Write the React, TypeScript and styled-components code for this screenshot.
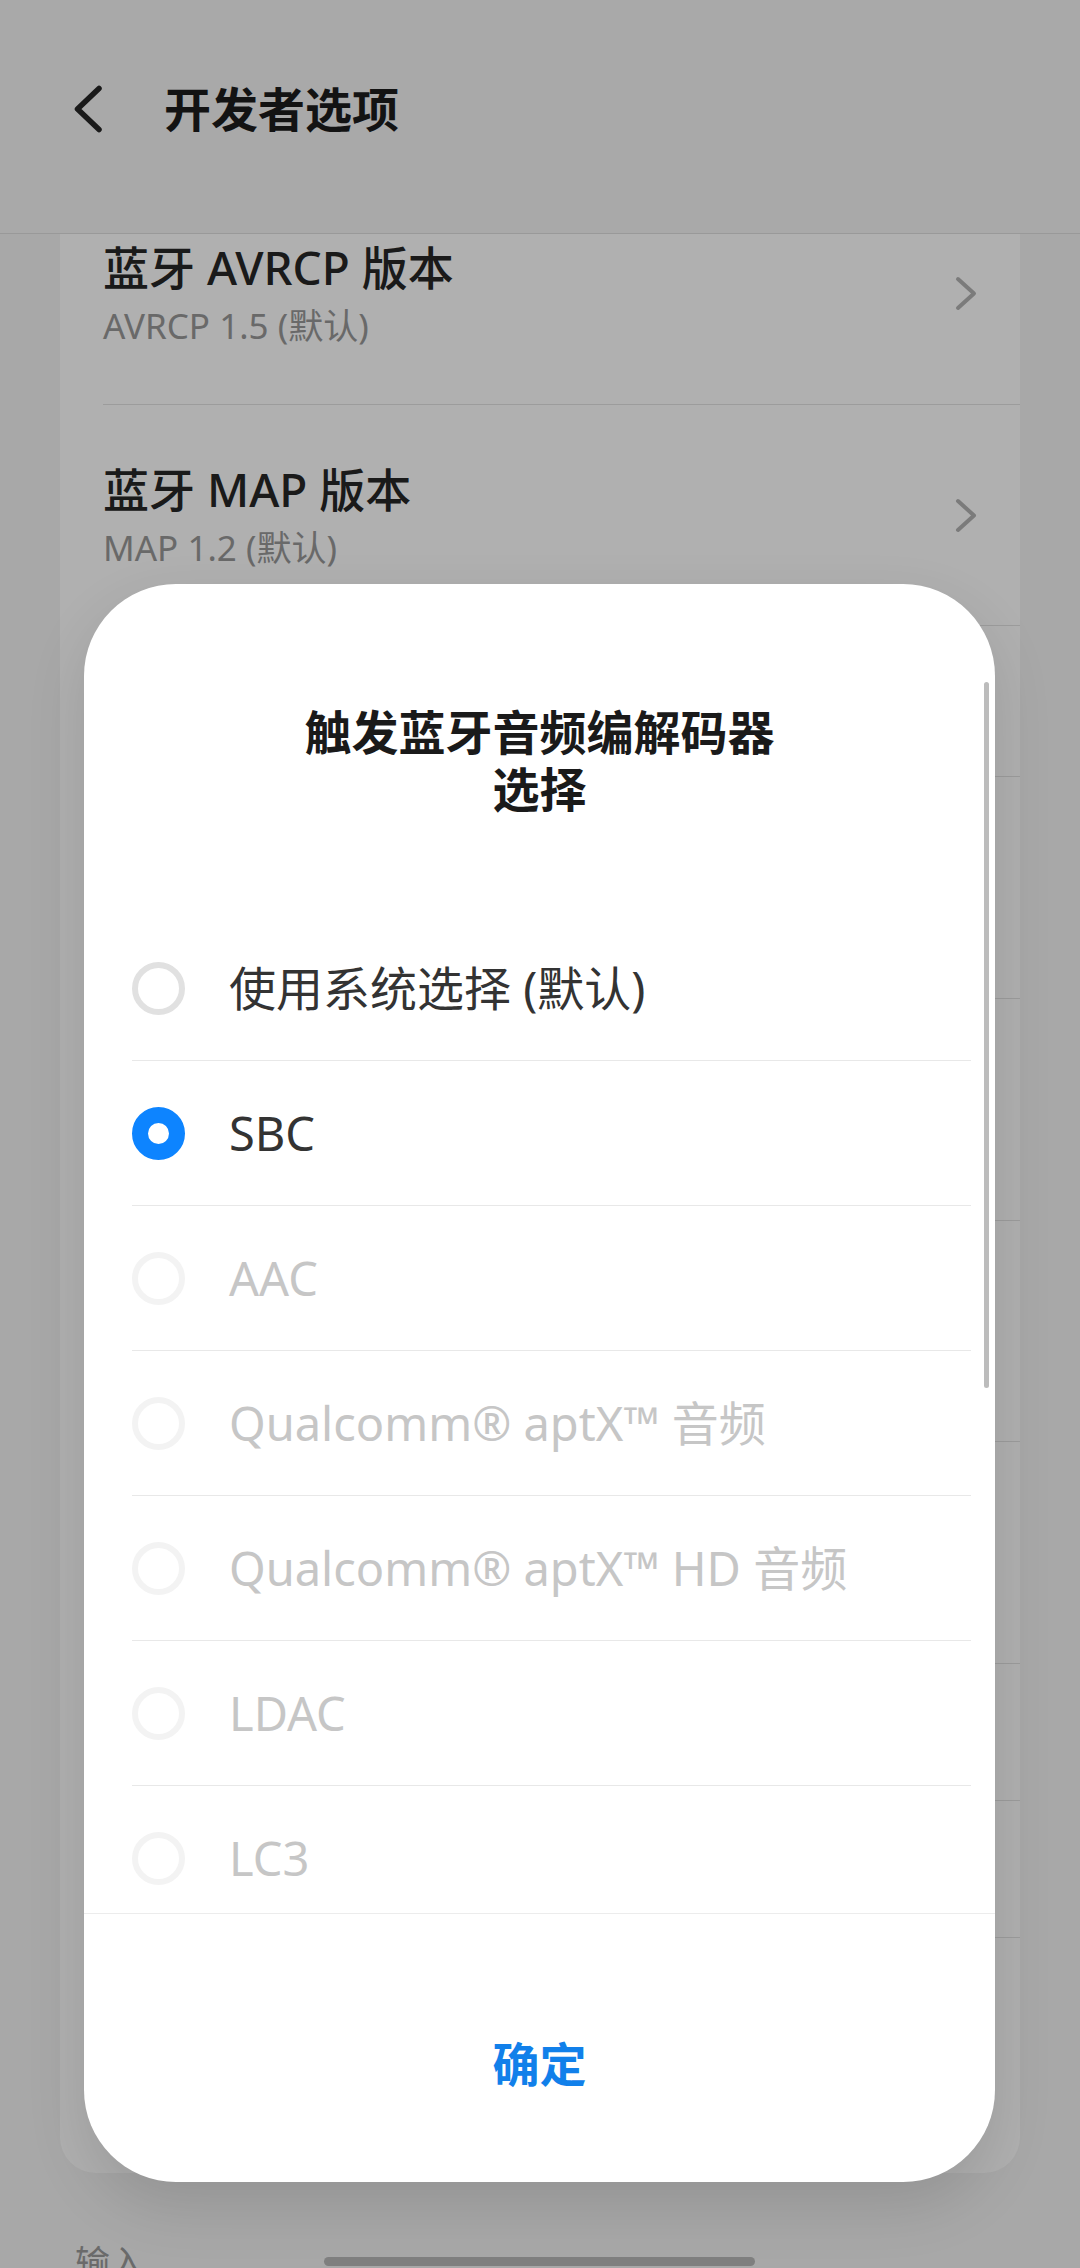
import React from "react";
import styled, { createGlobalStyle } from "styled-components";

const GlobalStyle = createGlobalStyle`
  html, body { margin: 0; padding: 0; }
  body {
    width: 1080px;
    height: 2268px;
    overflow: hidden;
    background: #f4f4f4;
    font-family: "Noto Sans", "Noto Sans CJK SC", sans-serif;
  }
  * { box-sizing: border-box; }
`;

const Screen = styled.div`
  position: relative;
  width: 1080px;
  height: 2268px;
  overflow: hidden;
  background: #f4f4f4;
  font-family: "Noto Sans", "Noto Sans CJK SC", sans-serif;
`;

const Header = styled.header`
  height: 234px;
  display: flex;
  align-items: flex-start;
  gap: 60px;
  padding: 80px 0 0 72px;
  background: #f5f5f5;
  border-bottom: 1px solid #dedede;
`;

const BackButton = styled.button`
  width: 32px;
  height: 58px;
  padding: 0;
  border: none;
  background: none;
  display: flex;
  color: #262626;
`;

const PageTitle = styled.h1`
  margin: 0;
  font-size: 47px;
  line-height: 58px;
  font-weight: 700;
  color: #1c1c1c;
`;

const Content = styled.main`
  height: 2034px;
  overflow: hidden;
  padding: 0 60px;
`;

const Card = styled.section`
  margin-top: -51px;
  background: #ffffff;
  border-radius: 36px;
`;

const SettingRow = styled.div<{ $h: number; $last?: boolean }>`
  height: ${(p) => p.$h}px;
  margin-left: 43px;
  padding-right: 43px;
  display: flex;
  align-items: center;
  justify-content: space-between;
  border-bottom: ${(p) => (p.$last ? "none" : "1px solid #e2e2e2")};
`;

const RowText = styled.div`
  display: flex;
  flex-direction: column;
  gap: 9px;
`;

const RowTitle = styled.div`
  font-size: 46px;
  line-height: 56px;
  font-weight: 500;
  color: #262626;
  white-space: nowrap;
`;

const RowValue = styled.div`
  font-size: 35px;
  line-height: 44px;
  color: #999999;
  white-space: nowrap;
`;

const Chevron = styled.svg`
  width: 22px;
  height: 35px;
  color: #b3b3b3;
  flex: none;
`;

const SectionLabel = styled.div`
  margin-top: 67px;
  padding-left: 15px;
  font-size: 35px;
  line-height: 46px;
  color: #9a9a9a;
`;

const Scrim = styled.div`
  position: absolute;
  inset: 0;
  background: rgba(0, 0, 0, 0.31);
`;

const Dialog = styled.div`
  position: absolute;
  left: 84px;
  top: 584px;
  width: 911px;
  height: 1598px;
  border-radius: 92px;
  background: #ffffff;
  display: flex;
  flex-direction: column;
  overflow: hidden;
  box-shadow: 0 24px 60px rgba(0, 0, 0, 0.12);
`;

const ScrollArea = styled.div`
  position: relative;
  flex: none;
  height: 1330px;
  overflow: hidden;
  border-bottom: 1px solid #ececec;
`;

const DialogTitle = styled.h2`
  margin: 0 auto;
  padding-top: 120px;
  width: 490px;
  text-align: center;
  font-size: 47px;
  line-height: 57px;
  font-weight: 700;
  color: #1a1a1a;
`;

const OptionList = styled.div`
  margin-top: 98px;
  padding: 0 24px 0 48px;
`;

const Option = styled.div`
  height: 145px;
  display: flex;
  align-items: center;
  gap: 44px;
  border-bottom: 1px solid #e8e8e8;
`;

const Radio = styled.span<{ $checked?: boolean; $disabled?: boolean }>`
  flex: none;
  width: 53px;
  height: 53px;
  border-radius: 50%;
  background: #ffffff;
  border: ${(p) =>
    p.$checked
      ? "16px solid #0d84ff"
      : p.$disabled
      ? "6px solid #f3f3f3"
      : "6px solid #e1e1e1"};
`;

const OptionLabel = styled.span<{ $disabled?: boolean }>`
  font-size: 47px;
  line-height: 56px;
  color: ${(p) => (p.$disabled ? "#c6c6c6" : "#333333")};
  white-space: nowrap;
`;

const ScrollThumb = styled.div`
  position: absolute;
  right: 6px;
  top: 98px;
  width: 5px;
  height: 706px;
  border-radius: 3px;
  background: #bcbcbc;
`;

const Footer = styled.div`
  flex: 1;
  display: flex;
  justify-content: center;
  align-items: flex-start;
  padding-top: 122px;
`;

const ConfirmButton = styled.button`
  border: none;
  background: none;
  padding: 0;
  font-family: inherit;
  font-size: 47px;
  line-height: 56px;
  font-weight: 700;
  color: #1180ea;
`;

const HomeBar = styled.div`
  position: absolute;
  left: 324px;
  top: 2257px;
  width: 431px;
  height: 9px;
  border-radius: 5px;
  background: #7f7f7f;
`;

const ChevronRight = () => (
  <Chevron viewBox="0 0 22 35" fill="none">
    <path
      d="M3 3 L19 17.5 L3 32"
      stroke="currentColor"
      strokeWidth="4"
      strokeLinecap="round"
      strokeLinejoin="round"
    />
  </Chevron>
);

const options = [
  { label: "使用系统选择 (默认)", checked: false, disabled: false },
  { label: "SBC", checked: true, disabled: false },
  { label: "AAC", checked: false, disabled: true },
  { label: "Qualcomm® aptX™ 音频", checked: false, disabled: true },
  { label: "Qualcomm® aptX™ HD 音频", checked: false, disabled: true },
  { label: "LDAC", checked: false, disabled: true },
  { label: "LC3", checked: false, disabled: true },
];

const laterRows = [151, 222, 222, 221, 222, 137, 137];

export default function App() {
  return (
    <Screen>
      <GlobalStyle />
      <Header>
        <BackButton aria-label="返回">
          <svg width="32" height="58" viewBox="0 0 32 58" fill="none">
            <path
              d="M27 8.5 L5.5 29 L27 49.5"
              stroke="currentColor"
              strokeWidth="5.5"
              strokeLinecap="round"
              strokeLinejoin="round"
            />
          </svg>
        </BackButton>
        <PageTitle>开发者选项</PageTitle>
      </Header>
      <Content>
        <Card>
          <SettingRow $h={222}>
            <RowText>
              <RowTitle>蓝牙 AVRCP 版本</RowTitle>
              <RowValue>AVRCP 1.5 (默认)</RowValue>
            </RowText>
            <ChevronRight />
          </SettingRow>
          <SettingRow $h={221}>
            <RowText>
              <RowTitle>蓝牙 MAP 版本</RowTitle>
              <RowValue>MAP 1.2 (默认)</RowValue>
            </RowText>
            <ChevronRight />
          </SettingRow>
          {laterRows.map((h, i) => (
            <SettingRow key={i} $h={h} />
          ))}
          <SettingRow $h={235} $last />
        </Card>
        <SectionLabel>输入</SectionLabel>
      </Content>

      <Scrim />

      <Dialog role="dialog">
        <ScrollArea>
          <DialogTitle>触发蓝牙音频编解码器选择</DialogTitle>
          <OptionList>
            {options.map((o) => (
              <Option key={o.label}>
                <Radio $checked={o.checked} $disabled={o.disabled} />
                <OptionLabel $disabled={o.disabled}>{o.label}</OptionLabel>
              </Option>
            ))}
          </OptionList>
          <ScrollThumb />
        </ScrollArea>
        <Footer>
          <ConfirmButton>确定</ConfirmButton>
        </Footer>
      </Dialog>

      <HomeBar />
    </Screen>
  );
}
